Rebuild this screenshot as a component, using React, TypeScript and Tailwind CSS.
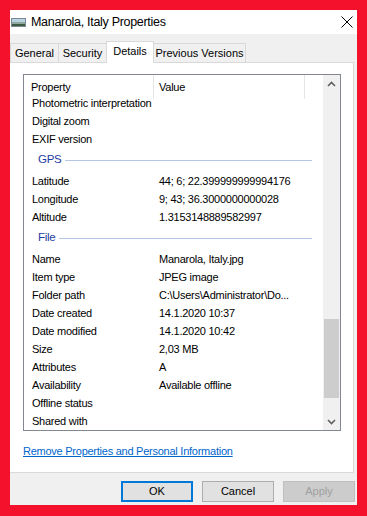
import React from 'react';

type Row = { k: string; v?: string };

const top: Row[] = [
  { k: 'Photometric interpretation' },
  { k: 'Digital zoom' },
  { k: 'EXIF version' },
];
const gps: Row[] = [
  { k: 'Latitude', v: '44; 6; 22.399999999994176' },
  { k: 'Longitude', v: '9; 43; 36.3000000000028' },
  { k: 'Altitude', v: '1.3153148889582997' },
];
const file: Row[] = [
  { k: 'Name', v: 'Manarola, Italy.jpg' },
  { k: 'Item type', v: 'JPEG image' },
  { k: 'Folder path', v: 'C:\\Users\\Administrator\\Do...' },
  { k: 'Date created', v: '14.1.2020 10:37' },
  { k: 'Date modified', v: '14.1.2020 10:42' },
  { k: 'Size', v: '2,03 MB' },
  { k: 'Attributes', v: 'A' },
  { k: 'Availability', v: 'Available offline' },
  { k: 'Offline status' },
  { k: 'Shared with' },
];

const font = { fontFamily: '"Liberation Sans", Arial, sans-serif' };

function Item({ r }: { r: Row }) {
  return (
    <div className="flex h-[18px] items-center text-[11px] tracking-[-0.25px] text-black">
      <div className="w-[135px] shrink-0 pl-[8px] whitespace-nowrap">{r.k}</div>
      <div className="whitespace-nowrap">{r.v}</div>
    </div>
  );
}

function Group({ title }: { title: string }) {
  return (
    <div className="flex h-[24px] items-center pl-[14px] pr-[11px]">
      <span className="text-[11.5px] tracking-[-0.3px] text-[#1e3ca0]">{title}</span>
      <div className="ml-[4px] h-px flex-1 bg-[#b4c6e4]" />
    </div>
  );
}

function Tab({ label, w, active }: { label: string; w: string; active?: boolean }) {
  return active ? (
    <div className={`${w} relative z-10 -mb-px flex h-[22px] items-center justify-center whitespace-nowrap border border-b-0 border-[#d9d9d9] bg-white pb-[2px] text-[11px]`}>{label}</div>
  ) : (
    <div className={`${w} flex h-[19px] items-center justify-center whitespace-nowrap border border-b-0 border-[#d9d9d9] bg-[#f0f0f0] text-[11px]`}>{label}</div>
  );
}

export default function App() {
  return (
    <div className="h-[516px] w-[367px] bg-[#f4112b] pb-[11px] pl-[10px] pr-[10px] pt-[10px]" style={font}>
      <div className="flex h-full flex-col bg-[#f0f0f0]">
        <div className="flex h-[24px] shrink-0 items-center bg-white">
          <svg width="15" height="9" viewBox="0 0 15 9" className="ml-[1px]">
            <rect width="15" height="9" fill="#7a8b96" />
            <rect x="1" y="1" width="13" height="3" fill="#b9d4e0" />
            <rect x="1" y="4" width="13" height="2" fill="#8fa9a0" />
            <rect x="1" y="6" width="13" height="2" fill="#3d5a42" />
          </svg>
          <span className="ml-[5px] text-[12.5px] tracking-[-0.3px] text-black">Manarola, Italy Properties</span>
          <svg width="12" height="12" viewBox="0 0 12 12" className="ml-auto mr-[4px]">
            <path d="M0.5 0.5 L11.5 11.5 M11.5 0.5 L0.5 11.5" stroke="#000" strokeWidth="1" />
          </svg>
        </div>

        <div className="flex items-end pt-[7px]">
          <Tab label="General" w="w-[49px]" />
          <Tab label="Security" w="w-[49px] -ml-px" />
          <Tab label="Details" w="w-[48px] -ml-px" active />
          <Tab label="Previous Versions" w="w-[93px] -ml-px" />
        </div>

        <div className="mr-[3px] flex flex-1 flex-col border border-l-0 border-[#d9d9d9] bg-white">
          <div className="ml-[13px] mt-[11px] flex h-[357px] w-[318px] shrink-0 border border-[#828790]">
            <div className="flex flex-1 flex-col overflow-hidden">
              <div className="relative z-10 flex h-[24px] shrink-0 items-center bg-white text-[11px] tracking-[-0.25px] text-black">
                <div className="flex h-full w-[129px] items-center pl-[7px]">Property</div>
                <div className="h-full w-px bg-[#e5e5e5]" />
                <div className="flex h-full w-[150px] items-center pl-[5px]">Value</div>
                <div className="h-full w-px bg-[#e5e5e5]" />
              </div>
              <div className="-mt-[5px]">
                {top.map(r => <Item key={r.k} r={r} />)}
                <Group title="GPS" />
                {gps.map(r => <Item key={r.k} r={r} />)}
                <Group title="File" />
                {file.map(r => <Item key={r.k} r={r} />)}
              </div>
            </div>
            <div className="flex w-[17px] shrink-0 flex-col items-center bg-[#f0f0f0]">
              <svg width="9" height="6" viewBox="0 0 9 6" className="mt-[6px]">
                <path d="M1 5 L4.5 1.5 L8 5" stroke="#606060" strokeWidth="1.6" fill="none" />
              </svg>
              <div className="mt-[232px] h-[79px] w-[15px] bg-[#cdcdcd]" />
              <svg width="9" height="6" viewBox="0 0 9 6" className="mt-[21px]">
                <path d="M1 1 L4.5 4.5 L8 1" stroke="#606060" strokeWidth="1.6" fill="none" />
              </svg>
            </div>
          </div>
          <div className="ml-[13px] mt-[12px] text-[11px] tracking-[-0.25px] text-[#0066cc] underline">Remove Properties and Personal Information</div>
        </div>

        <div className="flex h-[32px] shrink-0 items-start justify-end gap-[9px] pr-[2px] pt-[8px] text-[11px]">
          <button className="h-[21px] w-[72px] border-2 border-[#0078d7] bg-[#e1e1e1] text-black">OK</button>
          <button className="h-[21px] w-[72px] border border-[#adadad] bg-[#e1e1e1] text-black">Cancel</button>
          <button className="h-[21px] w-[72px] border border-[#bfbfbf] bg-[#cccccc] text-[#a0a0a0]">Apply</button>
        </div>
      </div>
    </div>
  );
}
